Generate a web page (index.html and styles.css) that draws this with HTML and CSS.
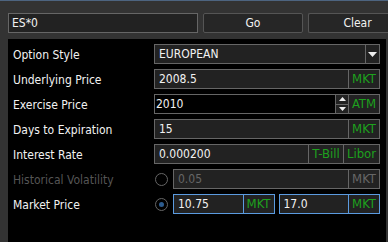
FILE: index.html
```html
<!DOCTYPE html>
<html lang="en">
<head>
  <meta charset="UTF-8">
  <title>Option Calculator</title>
  <link rel="stylesheet" href="styles.css">
</head>
<body>
  <div class="topbar">
    <div class="symbol">ES*0</div>
    <div class="btn go">Go</div>
    <div class="btn clear">Clear</div>
  </div>

  <div class="panel">
    <div class="label">Option Style</div>
    <div class="field select">
      <span class="val">EUROPEAN</span>
      <span class="arrow"><svg width="9" height="5" viewBox="0 0 9 5"><path d="M0 0h9L4.5 5z" fill="#eee"/></svg></span>
    </div>

    <div class="label">Underlying Price</div>
    <div class="field">
      <span class="val">2008.5</span>
      <span class="tag">MKT</span>
    </div>

    <div class="label">Exercise Price</div>
    <div class="field spin-field">
      <span class="val dark">2010</span>
      <span class="spin">
        <span class="up"><svg width="7" height="4" viewBox="0 0 7 4"><path d="M0 4h7L3.5 0z" fill="#eee"/></svg></span>
        <span class="down"><svg width="7" height="4" viewBox="0 0 7 4"><path d="M0 0h7L3.5 4z" fill="#eee"/></svg></span>
      </span>
      <span class="tag">ATM</span>
    </div>

    <div class="label">Days to Expiration</div>
    <div class="field">
      <span class="val">15</span>
      <span class="tag">MKT</span>
    </div>

    <div class="label">Interest Rate</div>
    <div class="field">
      <span class="val">0.000200</span>
      <span class="tag wide">T-Bill</span>
      <span class="tag wide">Libor</span>
    </div>

    <div class="label disabled">Historical Volatility</div>
    <div class="radio-row">
      <span class="radio"></span>
      <div class="field off">
        <span class="val">0.05</span>
        <span class="tag">MKT</span>
      </div>
    </div>

    <div class="label">Market Price</div>
    <div class="radio-row">
      <span class="radio on"></span>
      <div class="field blue">
        <span class="val">10.75</span>
        <span class="tag">MKT</span>
      </div>
      <div class="field blue">
        <span class="val">17.0</span>
        <span class="tag">MKT</span>
      </div>
    </div>
  </div>
</body>
</html>
```

FILE: styles.css
```css
html, body { margin: 0; height: 100%; overflow: hidden; }
body { background: #333; border-top: 1px solid #4d6480; font-family: "DejaVu Sans Condensed", "DejaVu Sans", sans-serif; font-stretch: condensed; font-size: 12px; color: #f2f2f2; width: 388px; box-sizing: border-box; }

.topbar { display: flex; gap: 5px; padding: 12px 0 0 8px; height: 20px; }
.symbol { width: 185px; height: 18px; border: 1px solid #666; background: #222; padding-left: 3px; line-height: 18px; box-sizing: content-box; }
.btn { width: 98px; height: 18px; border: 1px solid #555; border-radius: 2px; background: #262626; text-align: center; line-height: 18px; }
.clear { flex: 1; width: auto; padding-left: 18px; border-right: none; border-radius: 2px 0 0 2px; }

.panel { background: #000; margin: 6px 2px 0 8px; height: 210px; padding: 5px 6px 0 5px; display: grid; grid-template-columns: 141px 226px; grid-auto-rows: 20px; row-gap: 5px; align-items: center; }
.label { padding-top: 1px; }
.label.disabled { color: #555; }

.field { display: flex; height: 20px; border: 1px solid #666; background: #222; box-sizing: border-box; }
.field .val { flex: 1; padding-left: 4px; line-height: 18px; overflow: hidden; }
.field .val.dark { background: #000; padding-left: 1px; }
.tag { width: 30px; border-left: 1px solid #666; color: #1ea01e; text-align: center; line-height: 18px; font-size: 13px; }
.tag.wide { width: 34px; }
.tag.wide + .tag.wide { width: 35px; }

.select .arrow { width: 13px; border-left: 1px solid #666; display: flex; align-items: center; justify-content: center; }

.spin { width: 12px; display: flex; flex-direction: column; border-left: 1px solid #666; }
.spin span { flex: 1; display: flex; align-items: center; justify-content: center; background: #222; }
.spin .up { border-bottom: 1px solid #666; }

.radio-row { display: flex; align-items: center; gap: 4px; }
.radio { width: 11px; height: 11px; border: 1px solid #666; border-radius: 50%; margin: 0 1px 0 1px; flex: none; position: relative; }
.radio.on::after { content: ""; position: absolute; left: 3px; top: 3px; width: 5px; height: 5px; border-radius: 50%; background: #2d5c8f; }
.radio-row .field { flex: 1; }
.field.off { color: #666; }
.field.off .tag { color: #666; }
.field.blue { border-color: #5b9be0; }
.field.blue .tag { border-left-color: #5b9be0; }
```
